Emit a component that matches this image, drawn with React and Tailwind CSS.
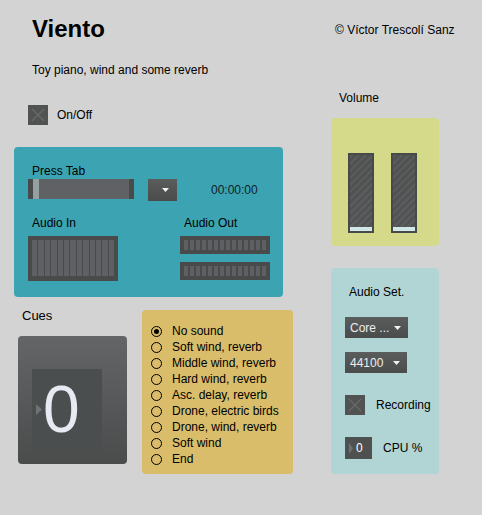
import React from 'react'

const cues = [
  'No sound',
  'Soft wind, reverb',
  'Middle wind, reverb',
  'Hard wind, reverb',
  'Asc. delay, reverb',
  'Drone, electric birds',
  'Drone, wind, reverb',
  'Soft wind',
  'End',
]

function Toggle() {
  return (
    <div className="w-5 h-5 bg-[#505352] flex items-center justify-center">
      <svg width="20" height="20" viewBox="0 0 20 20">
        <path d="M4 4 L16 16 M16 4 L4 16" stroke="#676b6b" strokeWidth="1.2" />
      </svg>
    </div>
  )
}

function DownArrow() {
  return (
    <svg width="7" height="4" viewBox="0 0 7 4">
      <path d="M0 0 H7 L3.5 4 Z" fill="#f2f2f2" />
    </svg>
  )
}

function Menu({ label, className }) {
  return (
    <div className={`h-[21px] bg-gradient-to-b from-[#5b5d5d] to-[#4a4c4c] flex items-center justify-between pl-[5px] pr-[7px] ${className}`}>
      <span className="text-[12px] leading-[14px] text-[#ededed] whitespace-nowrap">{label}</span>
      <DownArrow />
    </div>
  )
}

function RightTri({ className }) {
  return (
    <svg className={className} width="6" height="11" viewBox="0 0 6 11">
      <path d="M0 0 L6 5.5 L0 11 Z" fill="#6f7273" />
    </svg>
  )
}

function VolumeSlider() {
  return (
    <div className="w-[26px] h-[80px] border-2 border-[#484949] flex flex-col">
      <div className="flex-1 bg-[repeating-linear-gradient(135deg,#5a5b5c_0px,#5a5b5c_2.5px,#505252_2.5px,#505252_5px)]" />
      <div className="h-[4px] bg-[#d3e7e9]" />
    </div>
  )
}

export default function App() {
  return (
    <div className="w-[482px] h-[515px] bg-[#d3d3d3] flex overflow-hidden text-black font-['Liberation_Sans',Arial,sans-serif]">
      <div className="ml-[14px] w-[279px] flex flex-col">
        <h1 className="mt-[15px] ml-[18px] text-[24px] leading-[28px] font-bold">Viento</h1>
        <p className="mt-[20px] ml-[18px] text-[12px] leading-[14px]">Toy piano, wind and some reverb</p>
        <div className="mt-[28px] ml-[14px] h-5 flex items-center gap-[9px]">
          <Toggle />
          <span className="text-[12px] leading-[14px]">On/Off</span>
        </div>

        <div className="mt-[22px] w-[269px] h-[150px] rounded-[4px] bg-[#3ca3b2] flex flex-col">
          <span className="mt-[17px] ml-[18px] text-[12px] leading-[14px]">Press Tab</span>
          <div className="mt-[1px] ml-[14px] flex items-start">
            <div className="w-[106px] h-5 bg-[#606165] border-x-[5px] border-[#494b4b] flex">
              <div className="w-[6px] h-full bg-[#95a0a1]" />
            </div>
            <div className="ml-[14px] w-[29px] h-[22px] bg-gradient-to-b from-[#5b5d5d] to-[#4a4c4c] flex items-center justify-end pr-[8px]">
              <DownArrow />
            </div>
            <div className="ml-[34px] h-[22px] flex items-center text-[12px] leading-[14px] text-[#0e1e2a]">00:00:00</div>
          </div>
          <div className="mt-[15px] ml-[14px] flex items-start">
            <div className="w-[90px] flex flex-col">
              <span className="ml-[4px] text-[12px] leading-[14px]">Audio In</span>
              <div className="mt-[6px] h-[45px] bg-[#494a4a] px-[4px] pt-[4px] pb-[5px] flex gap-px">
                {Array.from({ length: 13 }).map((_, i) => (
                  <div key={i} className="flex-1 bg-[#5f6064]" />
                ))}
              </div>
            </div>
            <div className="ml-[62px] w-[90px] flex flex-col">
              <span className="ml-[4px] text-[12px] leading-[14px]">Audio Out</span>
              {[0, 1].map(m => (
                <div key={m} className={`${m ? 'mt-[8px]' : 'mt-[6px]'} h-[18px] bg-[#494a4a] p-[4px] flex gap-[2px]`}>
                  {Array.from({ length: 14 }).map((_, i) => (
                    <div key={i} className="flex-1 bg-[#5f6064]" />
                  ))}
                </div>
              ))}
            </div>
          </div>
        </div>

        <div className="mt-[10px] flex items-start">
          <div className="ml-[4px] w-[109px] flex flex-col">
            <span className="mt-[1px] ml-[4px] text-[13px] leading-[15px]">Cues</span>
            <div className="mt-[13px] h-[128px] rounded-[4px] bg-gradient-to-b from-[#636567] to-[#4a4c4c] pt-[33px] pl-[14px]">
              <div className="w-[70px] h-[80px] bg-[#4b4e4e] flex items-center">
                <RightTri className="ml-[4px]" />
                <span className="ml-[1px] text-[66px] leading-none text-[#e8eaf3]">0</span>
              </div>
            </div>
          </div>
          <div className="ml-[15px] mt-[3px] w-[151px] h-[164px] rounded-[4px] bg-[#d9bd6b] pt-[13px] pl-[9px] flex flex-col">
            {cues.map((c, i) => (
              <div key={c} className="h-4 flex items-center">
                <div className="w-[11px] h-[11px] rounded-full border-[1.3px] border-black flex items-center justify-center">
                  {i === 0 && <div className="w-[5px] h-[5px] rounded-full bg-black" />}
                </div>
                <span className="ml-[10px] text-[12px] leading-[14px] whitespace-nowrap">{c}</span>
              </div>
            ))}
          </div>
        </div>
      </div>

      <div className="ml-[38px] w-[108px] flex flex-col">
        <p className="mt-[23px] ml-[4px] text-[12px] leading-[14px] whitespace-nowrap">© Víctor Trescolí Sanz</p>
        <p className="mt-[54px] ml-[8px] text-[12px] leading-[14px]">Volume</p>
        <div className="mt-[13px] h-[128px] rounded-[4px] bg-[#d5da8a] flex items-start pt-[35px] pl-[17px] gap-[17px]">
          <VolumeSlider />
          <VolumeSlider />
        </div>
        <div className="mt-[22px] h-[206px] rounded-[4px] bg-[#b1d5d5] flex flex-col">
          <span className="mt-[17px] ml-[18px] text-[12px] leading-[14px]">Audio Set.</span>
          <Menu label="Core ..." className="mt-[18px] ml-[14px] w-[63px]" />
          <Menu label="44100" className="mt-[14px] ml-[14px] w-[62px]" />
          <div className="mt-[22px] ml-[14px] h-5 flex items-center gap-[11px]">
            <Toggle />
            <span className="text-[12px] leading-[14px]">Recording</span>
          </div>
          <div className="mt-[22px] ml-[14px] flex items-center gap-[11px]">
            <div className="w-[27px] h-[22px] bg-[#4f5151] flex items-center pl-[4px]">
              <svg width="4" height="11" viewBox="0 0 4 11">
                <path d="M0 0 L4 5.5 L0 11 Z" fill="#6f7273" />
              </svg>
              <span className="ml-[3px] text-[12px] leading-[14px] text-white">0</span>
            </div>
            <span className="text-[12px] leading-[14px]">CPU %</span>
          </div>
        </div>
      </div>
    </div>
  )
}
